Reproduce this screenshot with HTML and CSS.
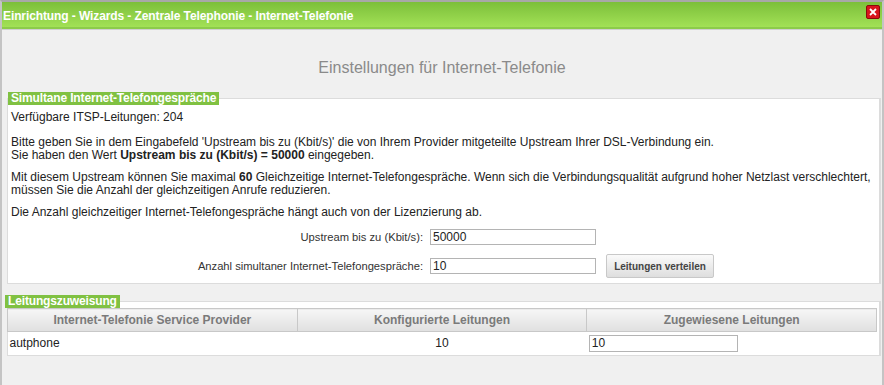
FILE: index.html
```html
<!DOCTYPE html>
<html>
  <head>
    <title>Internet-Telefonie</title>
    <link rel="stylesheet" href="styles.css">
  </head>

  <body>
    <div class="window">
      <div class="titlebar">
        <span class="title">Einrichtung - Wizards - Zentrale Telephonie - Internet-Telefonie</span>
        <span class="close">
          <svg width="14" height="14" viewBox="0 0 14 14">
            <rect x="0.5" y="0.5" width="13" height="13" rx="1.5" fill="#d8141c" stroke="#8a0a0a"/>
            <path d="M4 4 L10 10 M10 4 L4 10" stroke="#fff" stroke-width="1.8"/>
          </svg>
        </span>
      </div>

      <div class="content">
        <h2 class="heading">Einstellungen für Internet-Telefonie</h2>

        <fieldset class="group">
          <legend>Simultane Internet-Telefongespräche</legend>
          <p class="first">Verfügbare ITSP-Leitungen: 204</p>
          <p class="wide">Bitte geben Sie in dem Eingabefeld 'Upstream bis zu (Kbit/s)' die von Ihrem Provider mitgeteilte Upstream Ihrer DSL-Verbindung ein.<br />
            Sie haben den Wert <b>Upstream bis zu (Kbit/s) = 50000</b> eingegeben.</p>
          <p>Mit diesem Upstream können Sie maximal <b>60</b> Gleichzeitige Internet-Telefongespräche. Wenn sich die Verbindungsqualität aufgrund hoher Netzlast verschlechtert,<br />
            müssen Sie die Anzahl der gleichzeitigen Anrufe reduzieren.</p>
          <p>Die Anzahl gleichzeitiger Internet-Telefongespräche hängt auch von der Lizenzierung ab.</p>

          <div class="form">
            <label for="upstream">Upstream bis zu (Kbit/s):</label>
            <input type="text" id="upstream" value="50000" />
            <span></span>
            <label for="calls">Anzahl simultaner Internet-Telefongespräche:</label>
            <input type="text" id="calls" value="10" />
            <button class="button">Leitungen verteilen</button>
          </div>
        </fieldset>

        <fieldset class="group lines">
          <legend>Leitungszuweisung</legend>
          <table class="grid">
            <tr>
              <th>Internet-Telefonie Service Provider</th>
              <th>Konfigurierte Leitungen</th>
              <th>Zugewiesene Leitungen</th>
            </tr>
            <tr>
              <td>autphone</td>
              <td class="center">10</td>
              <td><input type="text" class="cell-input" value="10" /></td>
            </tr>
          </table>
        </fieldset>
      </div>
    </div>
  </body>
</html>
```

FILE: styles.css
```css
body {
  font-family: "Liberation Sans", Arial, sans-serif;
  font-size: 12px;
  color: #222;
  background-color: #f0f0f0;
  margin: 0;
  padding: 0;
}

.window {
  height: 383px;
  border-top: 2px solid #a8a8a8;
  border-left: 2px solid #c4c4c4;
  border-right: 2px solid #c4c4c4;
  background-color: #f0f0f0;
}

.titlebar {
  display: flex;
  align-items: center;
  justify-content: space-between;
  height: 25px;
  padding: 0 2px 0 1px;
  background: linear-gradient(#7cbf3a, #a2e156);
  border-bottom: 2px solid #8ccb4a;
  box-shadow: 0 1px 0 #d0d0d0;
}

.title {
  color: #fff;
  font-weight: bold;
  font-size: 12px;
  letter-spacing: -0.1px;
  padding-top: 2px;
}

.close {
  display: flex;
  margin-top: -6px;
}

.content {
  padding-top: 1px;
}

.heading {
  margin: 28px 0 0;
  font-size: 16px;
  font-weight: normal;
  line-height: 20px;
  color: #8a8a8a;
  text-align: center;
}

.group {
  margin: 14px 1px 0 5px;
  padding: 0 3px 5px;
  border: 1px solid #dcdcdc;
  border-right-width: 2px;
  background-color: #fff;
}

.group legend {
  margin-left: -3px;
  padding: 0 3px;
  background-color: #80c142;
  color: #fff;
  font-weight: bold;
  font-size: 12px;
  line-height: 13px;
  letter-spacing: -0.15px;
}

.group p {
  margin: 9px 0 0;
  line-height: 13px;
}

.group p.first {
  margin-top: 6px;
}

.group p.wide {
  margin-top: 12px;
}

.form {
  display: grid;
  grid-template-columns: 412px 166px auto;
  column-gap: 7px;
  row-gap: 9px;
  align-items: center;
  margin-top: 10px;
}

.form label {
  text-align: right;
  font-size: 11.2px;
  color: #333;
}

.form input,
.cell-input {
  box-sizing: border-box;
  height: 16px;
  padding: 0 2px;
  border: 1px solid #b4b4b4;
  font-family: inherit;
  font-size: 12px;
  color: #222;
}

.button {
  justify-self: start;
  margin-left: 3px;
  width: 108px;
  height: 24px;
  padding: 0;
  background: linear-gradient(#fafafa, #dedede);
  border: 1px solid #c8c8c8;
  border-radius: 2px;
  font-family: inherit;
  font-size: 10px;
  font-weight: bold;
  color: #444;
}

.lines {
  margin-top: 11px;
  padding: 0 1px 1px 0;
}

.grid {
  width: 100%;
  margin-left: -1px;
  border-collapse: collapse;
  table-layout: fixed;
}

.grid th {
  height: 22px;
  padding: 0;
  border: 1px solid #c8c8c8;
  background: linear-gradient(#f6f6f6, #e0e0e0);
  color: #7a7a7a;
  font-weight: bold;
  font-size: 12px;
}

.grid td {
  height: 22px;
  padding: 0 2px;
}

.grid td.center {
  text-align: center;
}

.cell-input {
  width: 149px;
  height: 17px;
}
```
